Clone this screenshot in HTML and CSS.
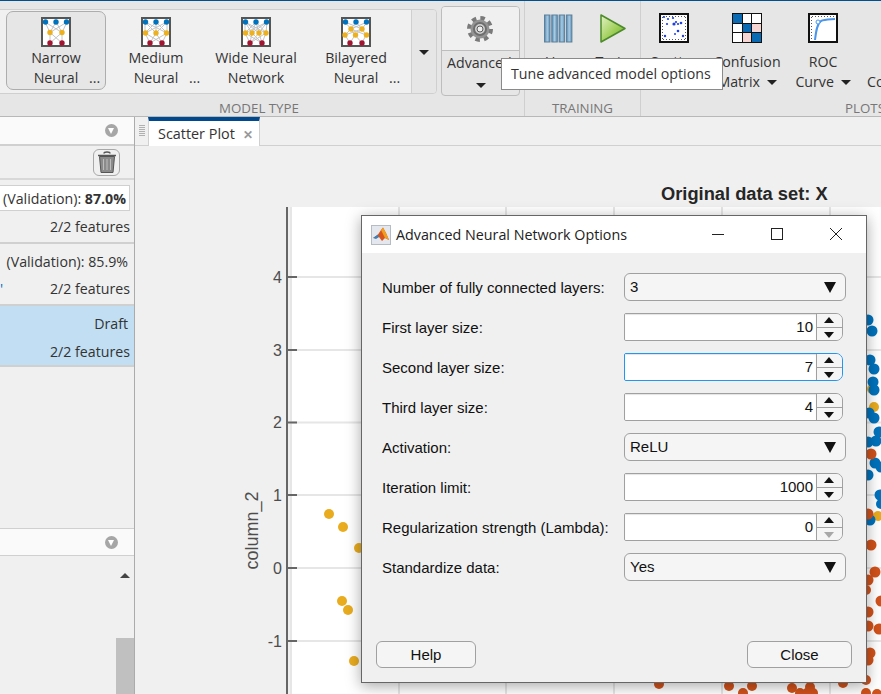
FILE: index.html
```html
<!DOCTYPE html>
<html lang="en">
<head>
  <meta charset="UTF-8" />
  <title>Classification Learner</title>
  <link rel="stylesheet" href="styles.css">
</head>
<body>
<div class="app">

  <!-- Toolstrip -->
  <header class="ribbon">
    <section class="group group-model">
      <div class="group-body">
        <div class="gallery">
          <div class="preset selected">
            <svg class="net" viewBox="0 0 30 30"><rect x="1" y="1" width="28" height="28" class="net-frame"/><path class="net-lines" d="M4 5L9 15.500M4 5L21 15.500M15 5L9 15.500M15 5L21 15.500M26 5L9 15.500M26 5L21 15.500M9 15.500L9 26M9 15.500L21 26M21 15.500L9 26M21 15.500L21 26"/><circle class="n-b" cx="4.500" cy="5" r="2.700"/><circle class="n-b" cx="15" cy="5" r="2.700"/><circle class="n-b" cx="25.500" cy="5" r="2.700"/><circle class="n-y" cx="9" cy="15.500" r="2.700"/><circle class="n-y" cx="21" cy="15.500" r="2.700"/><circle class="n-r" cx="9" cy="26" r="2.700"/><circle class="n-r" cx="21" cy="26" r="2.700"/></svg>
            <span class="line">Narrow</span>
            <span class="line">Neural<i class="dots">...</i></span>
          </div>
          <div class="preset">
            <svg class="net" viewBox="0 0 30 30"><rect x="1" y="1" width="28" height="28" class="net-frame"/><path class="net-lines" d="M4 5L4 16M4 5L15 16M4 5L26 16M15 5L4 16M15 5L15 16M15 5L26 16M26 5L4 16M26 5L15 16M26 5L26 16M4 16L9 26M4 16L21 26M15 16L9 26M15 16L21 26M26 16L9 26M26 16L21 26"/><circle class="n-b" cx="4.500" cy="5" r="2.700"/><circle class="n-b" cx="15" cy="5" r="2.700"/><circle class="n-b" cx="25.500" cy="5" r="2.700"/><circle class="n-y" cx="4.500" cy="16" r="2.700"/><circle class="n-y" cx="15" cy="16" r="2.700"/><circle class="n-y" cx="25.500" cy="16" r="2.700"/><circle class="n-r" cx="9" cy="26" r="2.700"/><circle class="n-r" cx="21" cy="26" r="2.700"/></svg>
            <span class="line">Medium</span>
            <span class="line">Neural<i class="dots">...</i></span>
          </div>
          <div class="preset">
            <svg class="net" viewBox="0 0 30 30"><rect x="1" y="1" width="28" height="28" class="net-frame"/><path class="net-lines" d="M4 5L4 16M4 5L11 16M4 5L18 16M4 5L25 16M15 5L4 16M15 5L11 16M15 5L18 16M15 5L25 16M26 5L4 16M26 5L11 16M26 5L18 16M26 5L25 16M4 16L9 26M4 16L21 26M11 16L9 26M11 16L21 26M18 16L9 26M18 16L21 26M25 16L9 26M25 16L21 26"/><circle class="n-b" cx="4.500" cy="5" r="2.700"/><circle class="n-b" cx="15" cy="5" r="2.700"/><circle class="n-b" cx="25.500" cy="5" r="2.700"/><circle class="n-y" cx="4.500" cy="16" r="2.700"/><circle class="n-y" cx="11" cy="16" r="2.700"/><circle class="n-y" cx="18" cy="16" r="2.700"/><circle class="n-y" cx="25" cy="16" r="2.700"/><circle class="n-r" cx="9" cy="26" r="2.700"/><circle class="n-r" cx="21" cy="26" r="2.700"/></svg>
            <span class="line">Wide Neural</span>
            <span class="line">Network</span>
          </div>
          <div class="preset">
            <svg class="net" viewBox="0 0 30 30"><rect x="1" y="1" width="28" height="28" class="net-frame"/><path class="net-lines" d="M4 5L10 12M4 5L21 12M15 5L10 12M15 5L21 12M26 5L10 12M26 5L21 12M10 12L4 18M10 12L14 18M10 12L25 18M21 12L4 18M21 12L14 18M21 12L25 18M4 18L9 26M14 18L9 26M14 18L21 26M25 18L21 26"/><circle class="n-b" cx="4.500" cy="5" r="2.700"/><circle class="n-b" cx="15" cy="5" r="2.700"/><circle class="n-b" cx="25.500" cy="5" r="2.700"/><circle class="n-y" cx="10" cy="12" r="2.700"/><circle class="n-y" cx="21" cy="12" r="2.700"/><circle class="n-y" cx="4" cy="18" r="2.700"/><circle class="n-y" cx="14.500" cy="18" r="2.700"/><circle class="n-y" cx="25.500" cy="18" r="2.700"/><circle class="n-r" cx="9" cy="26" r="2.700"/><circle class="n-r" cx="21" cy="26" r="2.700"/></svg>
            <span class="line">Bilayered</span>
            <span class="line">Neural<i class="dots">...</i></span>
          </div>
          <div class="gallery-more"><span class="caret"></span></div>
        </div>

        <div class="advanced">
          <div class="advanced-top">
            <svg width="28" height="28" viewBox="0 0 28 28">
              <circle cx="14" cy="14" r="10.500" class="gear-teeth"/>
              <circle cx="14" cy="14" r="9.500" class="gear-body"/>
              <circle cx="14" cy="14" r="6" class="gear-rim"/>
              <circle cx="14" cy="14" r="3" class="gear-hole"/>
            </svg>
          </div>
          <div class="advanced-bottom">
            <span class="line advanced-label">Advanced</span>
            <span class="caret"></span>
          </div>
        </div>
      </div>
      <div class="group-label">MODEL TYPE</div>
    </section>

    <section class="group group-training">
      <div class="group-body">
        <div class="tool tool-use">
          <svg class="tool-icon" width="30" height="30" viewBox="0 0 30 30">
            <defs>
              <linearGradient id="barFill" x1="0" x2="1" y1="0" y2="0">
                <stop offset="0" stop-color="#4f86b0"/><stop offset=".5" stop-color="#a9cbe2"/><stop offset="1" stop-color="#5b8fb7"/>
              </linearGradient>
              <linearGradient id="playFill" x1="0" x2="1" y1="0" y2="1">
                <stop offset="0" stop-color="#e4f2c6"/><stop offset=".55" stop-color="#a1d05a"/><stop offset="1" stop-color="#63a72c"/>
              </linearGradient>
            </defs>
            <rect class="bar" x="1.500" y="2" width="5.500" height="27"/>
            <rect class="bar" x="8.800" y="2" width="5.500" height="27"/>
            <rect class="bar" x="16.100" y="2" width="5.500" height="27"/>
            <rect class="bar" x="23.400" y="2" width="5.500" height="27"/>
          </svg>
          <span class="line">Use</span>
        </div>
        <div class="tool tool-train">
          <svg class="tool-icon" width="30" height="30" viewBox="0 0 30 30">
            <path class="play" d="M3 2L27 15.500L3 29Z"/>
          </svg>
          <span class="line">Train</span>
        </div>
      </div>
      <div class="group-label">TRAINING</div>
    </section>

    <section class="group group-plots">
      <div class="group-body">
        <div class="tool tool-scatter">
          <svg class="tool-icon" width="30" height="30" viewBox="0 0 30 30">
            <rect x="1" y="1" width="28" height="28" class="plot-frame"/>
            <path class="plot-ticks" d="M4 3.500H27M3.500 4V27M4 26.500H27M26.500 4V27"/>
            <g class="plot-dots">
              <circle cx="5" cy="4" r="1.100"/><circle cx="9" cy="6" r="1.100"/><circle cx="14" cy="5" r="1.100"/>
              <circle cx="8" cy="11" r="1.100"/><circle cx="15" cy="11" r="1.600"/><circle cx="17" cy="9" r="1.100"/>
              <circle cx="22" cy="10" r="1.300"/><circle cx="19" cy="11" r="1.100"/><circle cx="19" cy="18" r="1.300"/>
              <circle cx="6" cy="23" r="1.200"/><circle cx="24" cy="23" r="1.200"/><circle cx="16" cy="21" r="1"/>
            </g>
          </svg>
          <span class="line">Scatter</span>
        </div>
        <div class="tool tool-confusion">
          <div class="tool-icon matrix">
            <span class="cell-blue"></span><span></span><span></span>
            <span></span><span class="cell-blue"></span><span class="cell-pink"></span>
            <span></span><span class="cell-pink"></span><span class="cell-blue"></span>
          </div>
          <span class="line">Confusion</span>
          <span class="line">Matrix <span class="caret caret-inline"></span></span>
        </div>
        <div class="tool tool-roc">
          <svg class="tool-icon" width="30" height="30" viewBox="0 0 30 30">
            <rect x="1" y="1" width="28" height="28" class="plot-frame"/>
            <path class="plot-ticks" d="M4 3.500H27M3.500 4V27"/>
            <path class="roc-curve" d="M7 27C8 18 9 11 13 8C16 6.500 21 6.500 27 6"/>
            <circle class="roc-point" cx="10" cy="9" r="2"/>
          </svg>
          <span class="line">ROC</span>
          <span class="line">Curve <span class="caret caret-inline"></span></span>
        </div>
        <div class="tool tool-next">
          <span class="tool-blank"></span>
          <span class="line">&nbsp;</span>
          <span class="line">Compare</span>
        </div>
      </div>
      <div class="group-label">PLOTS</div>
    </section>
  </header>

  <div class="tooltip">Tune advanced model options</div>

  <div class="workspace">
    <!-- Left side panels -->
    <aside class="side">
      <div class="side-head"><span class="collapse"></span></div>
      <div class="side-tools">
        <div class="trash">
          <svg width="20" height="24" viewBox="0 0 20 24">
            <path class="trash-lid" d="M1 5.500H19M7 3.500C7 1.500 13 1.500 13 3.500"/>
            <path class="trash-can" d="M2.500 6.500H17.500L16 22.500H4Z"/>
            <path class="trash-ribs" d="M6.500 9V20M10 9V20M13.500 9V20"/>
          </svg>
        </div>
      </div>
      <div class="model model-top">
        <div class="model-row model-best">(Validation):&nbsp;<b>87.0%</b></div>
        <div class="model-row">2/2 features</div>
      </div>
      <div class="model">
        <div class="model-row model-acc">(Validation):&nbsp;85.9%</div>
        <div class="model-row"><span class="stray">'</span>2/2 features</div>
      </div>
      <div class="model model-draft">
        <div class="model-row model-acc">Draft</div>
        <div class="model-row">2/2 features</div>
      </div>
      <div class="side-gap"></div>
      <div class="side-head side-head-low"><span class="collapse"></span></div>
      <div class="side-list">
        <div class="scrollbar">
          <span class="scroll-up"></span>
          <span class="scroll-thumb"></span>
        </div>
      </div>
    </aside>

    <main class="doc">
      <div class="tabs">
        <span class="grip"></span>
        <div class="tab">Scatter Plot<span class="tab-close">&#10005;</span></div>
      </div>
      <div class="plot-area">
        <svg class="plot" viewBox="135 146 746 548" width="746" height="548">
          <text class="plot-title" x="661" y="199.500">Original data set: X</text>
          <rect x="290" y="207" width="591" height="487" fill="#fff"/>
          <path class="grid" d="M291 207V694M399 207V694M506 207V694M614 207V694M722 207V694M830 207V694M290 277H881M290 350H881M290 422.500H881M290 495H881M290 568H881M290 641H881"/>
          <path class="axis" d="M287 207V694M287 277H297M287 350H297M287 422.500H297M287 495H297M287 568H297M287 641H297"/>
          <text class="tick" x="282" y="283">4</text>
          <text class="tick" x="282" y="356">3</text>
          <text class="tick" x="282" y="428">2</text>
          <text class="tick" x="282" y="501">1</text>
          <text class="tick" x="282" y="574">0</text>
          <text class="tick" x="282" y="647">-1</text>
          <text class="tick-name" transform="translate(258 569.500) rotate(-90)">column_2</text>
          <g class="dot-y">
            <circle cx="329" cy="514" r="5"/><circle cx="343" cy="527" r="5"/><circle cx="359" cy="548" r="5"/>
            <circle cx="342" cy="601" r="5"/><circle cx="348" cy="610" r="5"/><circle cx="354" cy="661" r="5"/>
            <circle cx="872" cy="389" r="5"/><circle cx="874" cy="407" r="5"/><circle cx="878" cy="516" r="5"/>
          </g>
          <g class="dot-b">
            <circle cx="868" cy="320" r="5.500"/><circle cx="872" cy="331" r="5.500"/><circle cx="870" cy="360" r="5.500"/>
            <circle cx="874" cy="369" r="5.500"/><circle cx="873" cy="382" r="5.500"/><circle cx="874" cy="390" r="5.500"/>
            <circle cx="869" cy="413" r="5.500"/><circle cx="874" cy="418" r="5.500"/><circle cx="879" cy="432" r="5.500"/>
            <circle cx="876" cy="441" r="5.500"/><circle cx="868" cy="442" r="5.500"/><circle cx="875" cy="463" r="5.500"/>
            <circle cx="881" cy="467" r="5.500"/><circle cx="868" cy="475" r="5.500"/><circle cx="880" cy="495" r="5.500"/>
            <circle cx="881" cy="504" r="5"/><circle cx="870" cy="520" r="5.500"/>
          </g>
          <g class="dot-o">
            <circle cx="871" cy="454" r="5.500"/><circle cx="868" cy="514" r="5.500"/><circle cx="871" cy="545" r="5.500"/>
            <circle cx="875" cy="572" r="5.500"/><circle cx="868" cy="580" r="5.500"/><circle cx="866" cy="590" r="5"/>
            <circle cx="881" cy="601" r="5.500"/><circle cx="868" cy="612" r="5.500"/><circle cx="868" cy="626" r="5.500"/>
            <circle cx="879" cy="629" r="5.500"/><circle cx="870" cy="653" r="5.500"/><circle cx="868" cy="660" r="5.500"/>
            <circle cx="866" cy="680" r="5"/><circle cx="659" cy="684" r="5"/><circle cx="729" cy="686" r="5"/>
            <circle cx="752" cy="686" r="5"/><circle cx="743" cy="693" r="5"/><circle cx="792" cy="688" r="5"/>
            <circle cx="810" cy="687" r="5"/><circle cx="800" cy="693" r="5"/><circle cx="813" cy="693" r="5"/>
            <circle cx="807" cy="693" r="5"/><circle cx="843" cy="683" r="5"/><circle cx="866" cy="693" r="5"/>
            <circle cx="877" cy="694" r="5"/>
          </g>
        </svg>
      </div>
    </main>
  </div>

  <!-- Floating options window -->
  <div class="dialog">
    <div class="titlebar">
      <svg class="matlab" width="20" height="20" viewBox="0 0 20 20">
        <rect x=".5" y=".5" width="19" height="19" fill="#e4e8ee" stroke="#b5bcc6"/>
        <path d="M2 13L7 9.500L10 5L12 2.500L15 8L18 15L14 13L11 16L8 12Z" fill="#d9541a"/>
        <path d="M2 13L7 9.500L8 12L5 14Z" fill="#3f7fb5"/>
        <path d="M10 5L12 2.500L15 8L18 15L14 13Z" fill="#f0a020"/>
      </svg>
      <span class="title">Advanced Neural Network Options</span>
      <svg class="win-btn win-min" width="14" height="14" viewBox="0 0 14 14"><path d="M1 7.500H13"/></svg>
      <svg class="win-btn win-max" width="14" height="14" viewBox="0 0 14 14"><rect x="1.500" y="1.500" width="11" height="11"/></svg>
      <svg class="win-btn win-close" width="14" height="14" viewBox="0 0 14 14"><path d="M1 1L13 13M13 1L1 13"/></svg>
    </div>
    <div class="form">
      <div class="field">
        <label>Number of fully connected layers:</label>
        <div class="select">3<span class="select-arrow"></span></div>
      </div>
      <div class="field">
        <label>First layer size:</label>
        <div class="spinner"><span class="spin-value">10</span><span class="spin-btns"><span class="spin-up"></span><span class="spin-down"></span></span></div>
      </div>
      <div class="field">
        <label>Second layer size:</label>
        <div class="spinner focused"><span class="spin-value">7</span><span class="spin-btns"><span class="spin-up"></span><span class="spin-down"></span></span></div>
      </div>
      <div class="field">
        <label>Third layer size:</label>
        <div class="spinner"><span class="spin-value">4</span><span class="spin-btns"><span class="spin-up"></span><span class="spin-down"></span></span></div>
      </div>
      <div class="field">
        <label>Activation:</label>
        <div class="select">ReLU<span class="select-arrow"></span></div>
      </div>
      <div class="field">
        <label>Iteration limit:</label>
        <div class="spinner"><span class="spin-value">1000</span><span class="spin-btns"><span class="spin-up"></span><span class="spin-down"></span></span></div>
      </div>
      <div class="field">
        <label>Regularization strength (Lambda):</label>
        <div class="spinner"><span class="spin-value">0</span><span class="spin-btns"><span class="spin-up"></span><span class="spin-down off"></span></span></div>
      </div>
      <div class="field">
        <label>Standardize data:</label>
        <div class="select">Yes<span class="select-arrow"></span></div>
      </div>
    </div>
    <div class="dialog-foot">
      <button class="btn btn-help">Help</button>
      <button class="btn btn-close">Close</button>
    </div>
  </div>

</div>
</body>
</html>
```

FILE: styles.css
```css
* { margin: 0; padding: 0; box-sizing: border-box; }

body {
  background: #f0f0f0;
  font-family: 'Open Sans', 'Liberation Sans', sans-serif;
  font-size: 14.200px;
  color: #333;
}

.app {
  position: relative;
  width: 881px;
  height: 694px;
  overflow: hidden;
  display: flex;
  flex-direction: column;
}

/* ---- toolstrip ---- */
.ribbon {
  display: flex;
  flex: none;
  height: 117px;
  background: #e6e6e6;
  border-top: 1px solid #00508f;
  border-bottom: 1px solid #b8b8b8;
}

.group {
  flex: none;
  display: flex;
  flex-direction: column;
  height: 115px;
  border-right: 1px solid #cfcfcf;
}

.group-model { width: 531px; margin-left: -6px; }
.group-training { width: 116px; }
.group-plots { width: 448px; border-right: 0; }

.group-body { display: flex; height: 100px; }
.group-training .group-body { padding-left: 5px; }

.group-label {
  text-align: center;
  font-size: 13.300px;
  line-height: 15px;
  color: #777;
}

.line {
  display: block;
  position: relative;
  height: 20px;
  line-height: 20px;
  text-align: center;
  white-space: nowrap;
}

.caret {
  display: inline-block;
  width: 0;
  height: 0;
  border-left: 5px solid transparent;
  border-right: 5px solid transparent;
  border-top: 5px solid #222;
}

.caret-inline { margin-left: 3px; vertical-align: 2px; }

/* gallery of presets */
.gallery {
  display: flex;
  width: 443px;
  height: 85px;
  margin-top: 8px;
  padding: 1px 0 0 11px;
  background: #f0f0f0;
  border: 1px solid #cfcfcf;
  border-radius: 4px;
}

.preset {
  width: 100px;
  height: 79px;
  padding-top: 5px;
  border: 1px solid transparent;
  border-radius: 7px;
}

.preset.selected { background: #e6e6e6; border-color: #adadad; }
.preset .line { margin: 0 -1px; }

.net { display: block; width: 30px; height: 30px; margin: 0 auto 1px; }
.net-frame { fill: #fff; stroke: #555; stroke-width: 2; }
.net-lines { fill: none; stroke: #c4c4c4; stroke-width: 1; }
.n-b { fill: #0072bd; }
.n-y { fill: #edb120; }
.n-r { fill: #a2142f; }

.dots {
  position: absolute;
  left: 83px;
  top: 0;
  font-style: normal;
}

.gallery-more {
  margin-left: auto;
  width: 25px;
  margin-top: -1px;
  display: flex;
  justify-content: center;
  padding-top: 40px;
  background: #e6e6e6;
  border-left: 1px solid #cfcfcf;
  border-radius: 0 4px 4px 0;
}

/* advanced button */
.advanced {
  width: 79px;
  height: 90px;
  margin: 5px 0 0 4px;
  border: 1px solid #bdbdbd;
  border-radius: 4px;
  overflow: hidden;
}

.advanced-top {
  height: 44px;
  display: flex;
  align-items: center;
  justify-content: center;
  padding-right: 1px;
  background: #f0f0f0;
  border-bottom: 1px solid #bdbdbd;
}

.advanced-bottom { text-align: center; padding-top: 2px; }
.advanced-label { text-align: left; padding-left: 5px; }
.advanced-bottom .caret { margin-top: 6px; }

.gear-teeth { fill: none; stroke: #7a7a7a; stroke-width: 5; stroke-dasharray: 4.300 3.950; }
.gear-body { fill: #949494; }
.gear-rim { fill: #cfcfcf; stroke: #6e6e6e; stroke-width: 2; }
.gear-hole { fill: #eee; stroke: #5c5c5c; }

/* tool buttons */
.tool { flex: none; padding-top: 12px; }
.tool-icon { display: block; width: 30px; height: 30px; margin: 0 auto 9px; }
.tool-use { width: 55px; }
.tool-train { width: 55px; }
.tool-scatter { width: 66px; }
.tool-confusion { width: 80px; }
.tool-roc { width: 72px; }
.tool-next { width: 70px; }
.tool-next .line { text-align: left; padding-left: 8px; }
.tool-blank { display: block; height: 39px; }

.bar { fill: url(#barFill); stroke: #5d7f99; stroke-width: 1; }
.play { fill: url(#playFill); stroke: #4c8a2a; stroke-width: 1.500; stroke-linejoin: round; }

.plot-frame { fill: #fff; stroke: #111; stroke-width: 2; }
.plot-ticks { fill: none; stroke: #555; stroke-width: 1; stroke-dasharray: 1 2; }
.plot-dots circle { fill: #1f3fe0; }
.roc-curve { fill: none; stroke: #4b96ea; stroke-width: 2; }
.roc-point { fill: #fff; stroke: #4b96ea; stroke-width: 1; }

.matrix {
  display: grid;
  grid-template-columns: repeat(3, 1fr);
  grid-template-rows: repeat(3, 1fr);
  gap: 1px;
  padding: 1px;
  background: #111;
}

.matrix span { background: #fff; }
.matrix .cell-blue { background: #0a6ab4; }
.matrix .cell-pink { background: #f7d5d3; }

/* tooltip over the toolstrip */
.tooltip {
  position: absolute;
  left: 501px;
  top: 58px;
  width: 222px;
  height: 32px;
  padding-left: 9px;
  line-height: 30px;
  white-space: nowrap;
  background: #fff;
  border: 1px solid #8a8a8a;
}

/* ---- below the toolstrip ---- */
.workspace { flex: 1; display: flex; min-height: 0; }

.side {
  flex: none;
  width: 135px;
  display: flex;
  flex-direction: column;
  background: #f0f0f0;
  border-right: 1px solid #ababab;
}

.side-head {
  flex: none;
  height: 29px;
  display: flex;
  align-items: center;
  justify-content: flex-end;
  padding-right: 16px;
  background: #fafafa;
  border-bottom: 2px solid #d0d0d0;
}

.side-head-low { height: 28px; border-top: 1px solid #d0d0d0; border-bottom: 1px solid #d0d0d0; }

.collapse {
  position: relative;
  width: 13px;
  height: 13px;
  border-radius: 50%;
  background: #a6a6a6;
}

.collapse::after {
  content: '';
  position: absolute;
  left: 3px;
  top: 4px;
  border-left: 3.500px solid transparent;
  border-right: 3.500px solid transparent;
  border-top: 6px solid #fff;
}

.side-tools {
  flex: none;
  height: 34px;
  display: flex;
  align-items: center;
  justify-content: flex-end;
  padding-right: 14px;
  border-bottom: 2px solid #d8d8d8;
}

.trash {
  width: 27px;
  height: 27px;
  display: flex;
  align-items: center;
  justify-content: center;
  border: 1px solid #a8a8a8;
  border-radius: 6px;
}

.trash-lid { fill: none; stroke: #555; stroke-width: 1.500; }
.trash-can { fill: #8b8b8b; stroke: #555; }
.trash-ribs { fill: none; stroke: #bdbdbd; }

.model {
  flex: none;
  height: 62px;
  padding: 4px 4px 0 0;
  border-bottom: 2px solid #d0d0d0;
}

.model-top { height: 64px; padding-top: 5px; }

.model-row {
  height: 26px;
  line-height: 26px;
  text-align: right;
  white-space: nowrap;
}

.model-best {
  margin-bottom: 3px;
  margin-left: -40px;
  padding-right: 3px;
  line-height: 26px;
  background: #fff;
  border: 1px solid #d0d0d0;
}

.model-acc { margin-bottom: 2px; padding-right: 2px; line-height: 28px; }
.model-draft { height: 61px; padding-top: 5px; background: #c1def2; }
.model-draft .model-acc { line-height: 26px; }
.stray { float: left; color: #0072bd; }

.side-gap { flex: 1; }

.side-list { flex: none; height: 138px; display: flex; justify-content: flex-end; }

.scrollbar {
  width: 18px;
  display: flex;
  flex-direction: column;
  align-items: center;
}

.scroll-up {
  margin-top: 17px;
  border-left: 5px solid transparent;
  border-right: 5px solid transparent;
  border-bottom: 5px solid #444;
}

.scroll-thumb { width: 100%; margin-top: auto; height: 56px; background: #c0c0c0; }

.doc { flex: 1; display: flex; flex-direction: column; min-width: 0; }

.tabs {
  flex: none;
  height: 29px;
  display: flex;
  background: #f0f0f0;
  border-bottom: 1px solid #d0d0d0;
}

.grip {
  width: 6px;
  height: 11px;
  margin: 8px 3px 0 4px;
  background: repeating-linear-gradient(#b0b0b0 0 1px, transparent 1px 2px);
}

.tab {
  width: 112px;
  height: 29px;
  padding-left: 9px;
  line-height: 25px;
  font-size: 14.400px;
  background: #fff;
  border-top: 4px solid #00498f;
  border-left: 1px solid #d0d0d0;
  border-right: 1px solid #d0d0d0;
  white-space: nowrap;
}

.tab-close { margin-left: 8px; font-size: 12px; font-weight: bold; color: #999; }

.plot-area { flex: 1; background: #f0f0f0; overflow: hidden; }
.plot { display: block; font-family: 'Liberation Sans', sans-serif; }
.plot-title { font-size: 18.300px; font-weight: bold; fill: #262626; }
.grid { fill: none; stroke: #e6e6e6; stroke-width: 2; }
.axis { fill: none; stroke: #666; stroke-width: 2; }
.tick { font-size: 16px; text-anchor: end; fill: #4d4d4d; }
.tick-name { font-size: 18px; fill: #4d4d4d; }
.dot-y { fill: #e9ac1f; }
.dot-b { fill: #0072bd; }
.dot-o { fill: #d1521a; }

/* ---- options window ---- */
.dialog {
  position: absolute;
  left: 361px;
  top: 215px;
  width: 506px;
  height: 468px;
  display: flex;
  flex-direction: column;
  background: #f0f0f0;
  border: 1px solid #666;
  box-shadow: 0 3px 14px rgba(0, 0, 0, 0.35);
  font-family: 'Liberation Sans', sans-serif;
  color: #111;
}

.titlebar {
  flex: none;
  height: 37px;
  display: flex;
  align-items: center;
  padding-left: 9px;
  background: #fff;
}

.title {
  margin-left: 5px;
  font-family: 'Open Sans', sans-serif;
  font-size: 14.300px;
  color: #222;
}

.win-btn { flex: none; fill: none; stroke: #222; stroke-width: 1; }
.win-min { margin-left: auto; margin-top: -1px; }
.win-max { margin-left: 45px; margin-top: -1px; }
.win-close { margin: -1px 23px 0 45px; }

.form {
  display: flex;
  flex-direction: column;
  gap: 12px;
  padding: 20px 0 0 20px;
}

.field { display: flex; align-items: center; height: 28px; }
.field label { flex: none; width: 242px; font-size: 15px; white-space: nowrap; }

.select {
  flex: none;
  width: 222px;
  height: 28px;
  padding: 0 8px 2px 5px;
  display: flex;
  align-items: center;
  justify-content: space-between;
  font-size: 15px;
  background: #f5f5f5;
  border: 1px solid #a0a0a0;
  border-radius: 6px;
}

.select-arrow {
  border-left: 6px solid transparent;
  border-right: 6px solid transparent;
  border-top: 11px solid #111;
  margin: 2px 1px 0 0;
}

.spinner {
  flex: none;
  width: 219px;
  height: 28px;
  display: flex;
  border: 1px solid #a0a0a0;
  border-radius: 2px 7px 7px 2px;
  overflow: hidden;
}

.spin-value {
  flex: 1;
  padding-right: 3px;
  line-height: 26px;
  text-align: right;
  font-size: 15px;
  background: #fff;
  box-shadow: inset 0 1px 1px #e4e4e4;
}

.spin-btns {
  flex: none;
  width: 26px;
  display: flex;
  flex-direction: column;
  background: #f5f5f5;
  border-left: 1px solid #a0a0a0;
}

.spin-up, .spin-down {
  flex: 1;
  position: relative;
}

.spin-up { border-bottom: 1px solid #a0a0a0; }

.spin-up::after, .spin-down::after {
  content: '';
  position: absolute;
  left: 7px;
  border-left: 5px solid transparent;
  border-right: 5px solid transparent;
}

.spin-up::after { top: 3px; border-bottom: 6px solid #111; }
.spin-down::after { top: 4px; border-top: 6px solid #111; }
.spin-down.off::after { border-top-color: #a8a8a8; }

.spinner.focused { border-color: #2196f3; }

.dialog-foot {
  margin-top: auto;
  display: flex;
  justify-content: space-between;
  padding: 0 14px 14px;
}

.btn {
  height: 27px;
  font-family: inherit;
  font-size: 15px;
  color: #111;
  background: #f5f5f5;
  border: 1px solid #a0a0a0;
  border-radius: 6px;
}

.btn-help { width: 100px; }
.btn-close { width: 105px; }
```
